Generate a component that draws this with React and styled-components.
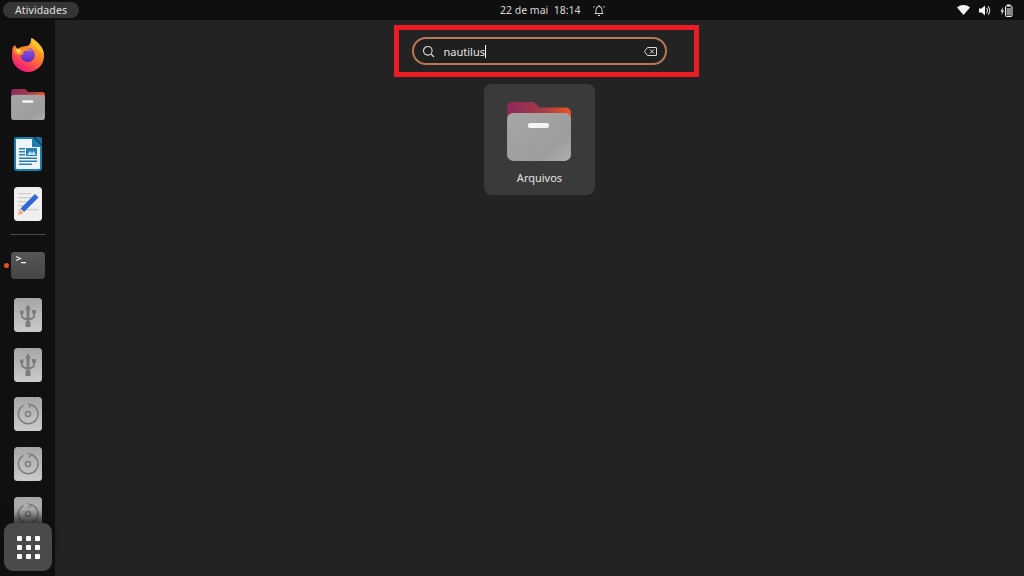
import React from "react";
import styled, { createGlobalStyle } from "styled-components";

const GlobalStyle = createGlobalStyle`
  html, body {
    margin: 0;
    padding: 0;
    background: #232323;
    overflow: hidden;
  }
  * {
    box-sizing: border-box;
  }
`;

const Screen = styled.div`
  width: 1024px;
  height: 576px;
  display: flex;
  flex-direction: column;
  overflow: hidden;
  position: relative;
  background: #232323;
  font-family: "Noto Sans", "Open Sans", sans-serif;
`;

const TopBar = styled.header`
  height: 20px;
  flex: none;
  display: grid;
  grid-template-columns: 497px auto 1fr;
  align-items: center;
  padding: 0 0 0 3px;
  background: #0f0f0f;
  color: #d8d8d8;
  font-size: 10.5px;
`;

const Activities = styled.div`
  justify-self: start;
  height: 16px;
  width: 76px;
  border-radius: 8px;
  background: #353535;
  color: #e0e0e0;
  letter-spacing: 0.12px;
  display: flex;
  align-items: center;
  justify-content: center;
`;

const Clock = styled.div`
  display: flex;
  align-items: center;
  gap: 12px;
`;

const Tray = styled.div`
  justify-self: end;
  display: flex;
  align-items: center;
  gap: 9px;
  padding-right: 11px;
`;

const Body = styled.div`
  flex: 1;
  display: flex;
  min-height: 0;
`;

const Dock = styled.nav`
  width: 55px;
  flex: none;
  background: #101010;
  display: flex;
  flex-direction: column;
  overflow: hidden;
  padding-top: 10px;
`;

const DockItem = styled.div`
  height: 49.6px;
  flex: none;
  display: flex;
  align-items: center;
  justify-content: center;
  position: relative;
  padding-left: 1px;
`;

const Separator = styled.div`
  height: 1px;
  width: 36px;
  flex: none;
  margin: 5.5px 0 6px 10px;
  background: #4a4a4a;
`;

const RunningDot = styled.span`
  position: absolute;
  left: 3.5px;
  top: 22.5px;
  width: 5px;
  height: 5px;
  border-radius: 50%;
  background: #e95420;
`;

const ShowApps = styled.div`
  position: absolute;
  left: 4px;
  top: 523px;
  width: 48px;
  height: 48px;
  border-radius: 9px;
  background: #4a4a4a;
  display: grid;
  grid-template-columns: repeat(3, 5px);
  grid-auto-rows: 5px;
  gap: 4px;
  place-content: center;
  box-shadow: 0 -8px 10px rgba(16, 16, 16, 0.75);
`;

const AppDot = styled.span`
  background: #fff;
  border-radius: 1px;
`;

const Overview = styled.main`
  flex: 1;
  display: flex;
  flex-direction: column;
  align-items: center;
  padding-top: 5px;
`;

const Highlight = styled.div`
  width: 305px;
  height: 52px;
  margin-left: 14px;
  border: 5px solid #ed1c24;
  display: flex;
  align-items: center;
  padding-left: 13px;
`;

const SearchBox = styled.div`
  width: 255px;
  height: 28px;
  border: 2px solid #bb7656;
  border-radius: 14px;
  background: #1f1f1f;
  display: flex;
  align-items: center;
  padding: 0 8.5px 0 7.5px;
  color: #e4e4e4;
  font-size: 11px;
`;

const Query = styled.div`
  flex: 1;
  margin-left: 9px;
  display: flex;
  align-items: center;
`;

const Caret = styled.span`
  width: 1px;
  height: 13px;
  background: #fff;
`;

const AppTile = styled.div`
  width: 111px;
  height: 111px;
  margin-top: 7px;
  border-radius: 8px;
  background: #3a3a3a;
  display: flex;
  flex-direction: column;
  align-items: center;
  padding: 18px 1px 0 0;
`;

const AppLabel = styled.div`
  margin: 9px 0 0 1px;
  color: #e2e2e2;
  font-size: 11px;
`;

const FolderIcon = ({ size, id }) => (
  <svg width={size} height={size * 0.92} viewBox="0 0 64 59">
    <defs>
      <linearGradient id={`${id}-tab`} x1="0" x2="1" y1="0" y2="0">
        <stop offset="0" stopColor="#8a2a5c" />
        <stop offset="0.55" stopColor="#a63a45" />
        <stop offset="1" stopColor="#e95420" />
      </linearGradient>
      <linearGradient id={`${id}-front`} x1="0" x2="1" y1="0" y2="1">
        <stop offset="0" stopColor="#a6a6a6" />
        <stop offset="0.72" stopColor="#9d9d9d" />
        <stop offset="0.86" stopColor="#a6a6a6" />
        <stop offset="1" stopColor="#b0b0b0" />
      </linearGradient>
    </defs>
    <path
      d="M0 30V5a5 5 0 0 1 5-5h19c3 0 4 1 6 3l2 2.500h27a5 5 0 0 1 5 5V30z"
      fill={`url(#${id}-tab)`}
    />
    <rect y="11" width="64" height="48" rx="6" fill={`url(#${id}-front)`} />
    <rect x="21" y="21" width="21" height="5" rx="2" fill="#f4f4f4" />
  </svg>
);

const Firefox = () => (
  <svg width="33" height="34" viewBox="0 0 33 34">
    <defs>
      <linearGradient id="ff-ring" x1="0.85" x2="0.25" y1="0" y2="1">
        <stop offset="0" stopColor="#ffd23a" />
        <stop offset="0.4" stopColor="#ff8a24" />
        <stop offset="0.75" stopColor="#ff3d5a" />
        <stop offset="1" stopColor="#e31587" />
      </linearGradient>
      <linearGradient id="ff-globe" x1="0.5" x2="0.5" y1="0" y2="1">
        <stop offset="0" stopColor="#8f5bf0" />
        <stop offset="1" stopColor="#5a2ab8" />
      </linearGradient>
    </defs>
    <path
      d="M1 9L3 7l2 4C8 9 12 8 15 8c2 0 4-3 4.500-8C26 4 32 10 32 18A16 16 0 0 1 0 18c0-4 0-6 1-9z"
      fill="url(#ff-ring)"
    />
    <path d="M19.500 0C26 4 32 10 32 17c-2-3-5-5-8-7-3-2-5-6-4.500-10z" fill="#ffc42c" />
    <circle cx="15.700" cy="17" r="7.200" fill="url(#ff-globe)" />
    <path d="M3 8l2 3c3-1 7-2 10-1 2 .500 4 2 5 3-3-1-6-.500-8 .500l-1 3-4 1-4-2L1 11z" fill="#ff8a1f" />
    <path d="M4 10.500l6 2-2.500 3-3-1.500z" fill="#ffd35a" />
  </svg>
);

const WriterIcon = () => (
  <svg width="28" height="34" viewBox="0 0 28 34">
    <path d="M2 0h17l9 9v22a3 3 0 0 1-3 3H3a3 3 0 0 1-3-3V2a2 2 0 0 1 2-2z" fill="#1a7fb0" />
    <path d="M3 2h15v8h8v21a1 1 0 0 1-1 1H3a1 1 0 0 1-1-1V3a1 1 0 0 1 1-1z" fill="#eef5fa" />
    <path d="M20 0h6a2 2 0 0 1 2 2v6z" fill="#1a6f9e" />
    <rect x="5" y="11" width="6" height="1.500" fill="#2a7fae" />
    <rect x="5" y="14" width="6" height="1.500" fill="#2a7fae" />
    <rect x="5" y="17" width="6" height="1.500" fill="#2a7fae" />
    <rect x="12" y="11" width="11" height="8" fill="#2a7fae" />
    <path d="M13 18l3-4 2 2 2-2 2 4z" fill="#bcdcef" />
    <rect x="5" y="20.500" width="18" height="1.500" fill="#2a7fae" />
    <rect x="5" y="23.500" width="18" height="1.500" fill="#2a7fae" />
    <rect x="5" y="26.500" width="13" height="1.500" fill="#2a7fae" />
  </svg>
);

const NotesIcon = () => (
  <svg width="28" height="34" viewBox="0 0 28 34">
    <rect width="28" height="34" rx="3.500" fill="#efefef" />
    <g fill="#cfcbc2">
      <rect x="4" y="6" width="13" height="1.200" />
      <rect x="4" y="10" width="15" height="1.200" />
      <rect x="4" y="14" width="13" height="1.200" />
      <rect x="4" y="18" width="10" height="1.200" />
      <rect x="4" y="22" width="20" height="1.200" />
    </g>
    <path d="M21 7l3.500 3.500L10 25l-3.500-3.500z" fill="#2f66d8" />
    <path d="M6.500 21.500L10 25l-2 1z" fill="#f3c79a" />
    <path d="M4 28l1.500-5 3.500 3.500z" fill="#f0a060" />
  </svg>
);

const TerminalIcon = () => (
  <svg width="34" height="27" viewBox="0 0 34 27">
    <defs>
      <linearGradient id="term-bg" x1="0" x2="0" y1="0" y2="1">
        <stop offset="0" stopColor="#565656" />
        <stop offset="1" stopColor="#454545" />
      </linearGradient>
    </defs>
    <rect width="34" height="27" rx="3.500" fill="url(#term-bg)" />
    <path d="M5 4.500l4.500 2L5 8.500" fill="none" stroke="#f0f0f0" strokeWidth="1.100" />
    <rect x="10" y="10" width="5" height="1.300" fill="#f0f0f0" />
  </svg>
);

const DriveBase = styled.div`
  width: 28px;
  height: 34px;
  border-radius: 3.500px;
  background: linear-gradient(180deg, #a6a6a6, #cbcbcb);
  display: flex;
  align-items: center;
  justify-content: center;
`;

const UsbIcon = () => (
  <DriveBase>
    <svg width="16" height="23" viewBox="0 0 16 23" fill="#7d7d7d">
      <path d="M8 0l3 5.500H9.500V18h-3V5.500H5z" />
      <path d="M7 16c-4 0-6-1.800-6-4.500V10H0V6.500h3.500V10H2.800v1.500c0 1.500 1.400 2.300 4.200 2.300z" />
      <path d="M9 14c3 0 4.200-.8 4.200-2.300V9.500H12V6h4v3.500h-1v2.200c0 2.500-2 4.300-6 4.300z" />
      <rect x="5.500" y="17.500" width="5" height="5.500" />
    </svg>
  </DriveBase>
);

const DiscIcon = () => (
  <DriveBase>
    <svg width="22" height="22" viewBox="0 0 22 22" fill="none" stroke="#7d7d7d">
      <path d="M14.500 1.700A9.800 9.800 0 1 1 6.500 2.300" strokeWidth="1.500" />
      <path d="M10.500 0.500l4 1.200-2.800 2.800" strokeWidth="1.200" />
      <circle cx="11" cy="11" r="2.500" strokeWidth="1.500" />
    </svg>
  </DriveBase>
);

const SearchIcon = () => (
  <svg width="13" height="13" viewBox="0 0 13 13" fill="none" stroke="#dcdcdc" strokeWidth="1.100">
    <circle cx="5.800" cy="5.800" r="4.300" />
    <path d="M9 9l3 3" />
  </svg>
);

const ClearIcon = () => (
  <svg width="13" height="9" viewBox="0 0 13 9" fill="none">
    <path d="M3.500.5H12a.5.500 0 0 1 .5.500v7a.5.500 0 0 1-.5.500H3.500L.5 4.500z" stroke="#dcdcdc" />
    <path d="M6 2.500l4 4m0-4l-4 4" stroke="#dcdcdc" />
  </svg>
);

const BellIcon = () => (
  <svg width="12" height="13" viewBox="0 0 12 13" fill="none" stroke="#d8d8d8" strokeWidth="1">
    <path d="M2 9.500c1-1 1-2 1-4a3 3 0 0 1 6 0c0 2 0 3 1 4z" />
    <path d="M5 11.500h2M6 1v1M1.500 2L.5 3.500M10.500 2l1 1.500" />
  </svg>
);

const WifiIcon = () => (
  <svg width="13" height="10" viewBox="0 0 13 10">
    <path d="M0 2.500C3.500-.8 9.500-.8 13 2.500L6.500 10z" fill="#f2f2f2" />
  </svg>
);

const VolumeIcon = () => (
  <svg width="12" height="11" viewBox="0 0 12 11">
    <path d="M0 3.500h2.500L6 .5v10L2.500 7.500H0z" fill="#f2f2f2" />
    <path d="M7.500 3a3.500 3.500 0 0 1 0 5M9 1.500a5.500 5.500 0 0 1 0 8" fill="none" stroke="#c4c4c4" strokeWidth="1.200" />
  </svg>
);

const BatteryIcon = () => (
  <svg width="13" height="13" viewBox="0 0 13 13">
    <path d="M3 3L.5 7.500h1.500L1.500 11 4 6.500H2.500z" fill="#f2f2f2" />
    <rect x="5.500" y="2" width="6.500" height="10.500" rx="1" fill="none" stroke="#f2f2f2" />
    <rect x="7" y="0.500" width="3.500" height="1.500" fill="#f2f2f2" />
    <rect x="6.500" y="4" width="4.500" height="7.500" fill="#8a8a8a" />
  </svg>
);

const App = () => {
  return (
    <>
      <GlobalStyle />
      <Screen>
        <TopBar>
          <Activities>Atividades</Activities>
          <Clock>
            <span>22 de mai&nbsp;&nbsp;18:14</span>
            <BellIcon />
          </Clock>
          <Tray>
            <WifiIcon />
            <VolumeIcon />
            <BatteryIcon />
          </Tray>
        </TopBar>
        <Body>
          <Dock>
            <DockItem><Firefox /></DockItem>
            <DockItem><FolderIcon size={34} id="dock-folder" /></DockItem>
            <DockItem><WriterIcon /></DockItem>
            <DockItem><NotesIcon /></DockItem>
            <Separator />
            <DockItem>
              <RunningDot />
              <TerminalIcon />
            </DockItem>
            <DockItem><UsbIcon /></DockItem>
            <DockItem><UsbIcon /></DockItem>
            <DockItem><DiscIcon /></DockItem>
            <DockItem><DiscIcon /></DockItem>
            <DockItem><DiscIcon /></DockItem>
          </Dock>
          <Overview>
            <Highlight>
              <SearchBox>
                <SearchIcon />
                <Query>
                  nautilus
                  <Caret />
                </Query>
                <ClearIcon />
              </SearchBox>
            </Highlight>
            <AppTile>
              <FolderIcon size={64} id="tile-folder" />
              <AppLabel>Arquivos</AppLabel>
            </AppTile>
          </Overview>
        </Body>
        <ShowApps>
          {Array.from({ length: 9 }, (_, i) => (
            <AppDot key={i} />
          ))}
        </ShowApps>
      </Screen>
    </>
  );
};

export default App;
